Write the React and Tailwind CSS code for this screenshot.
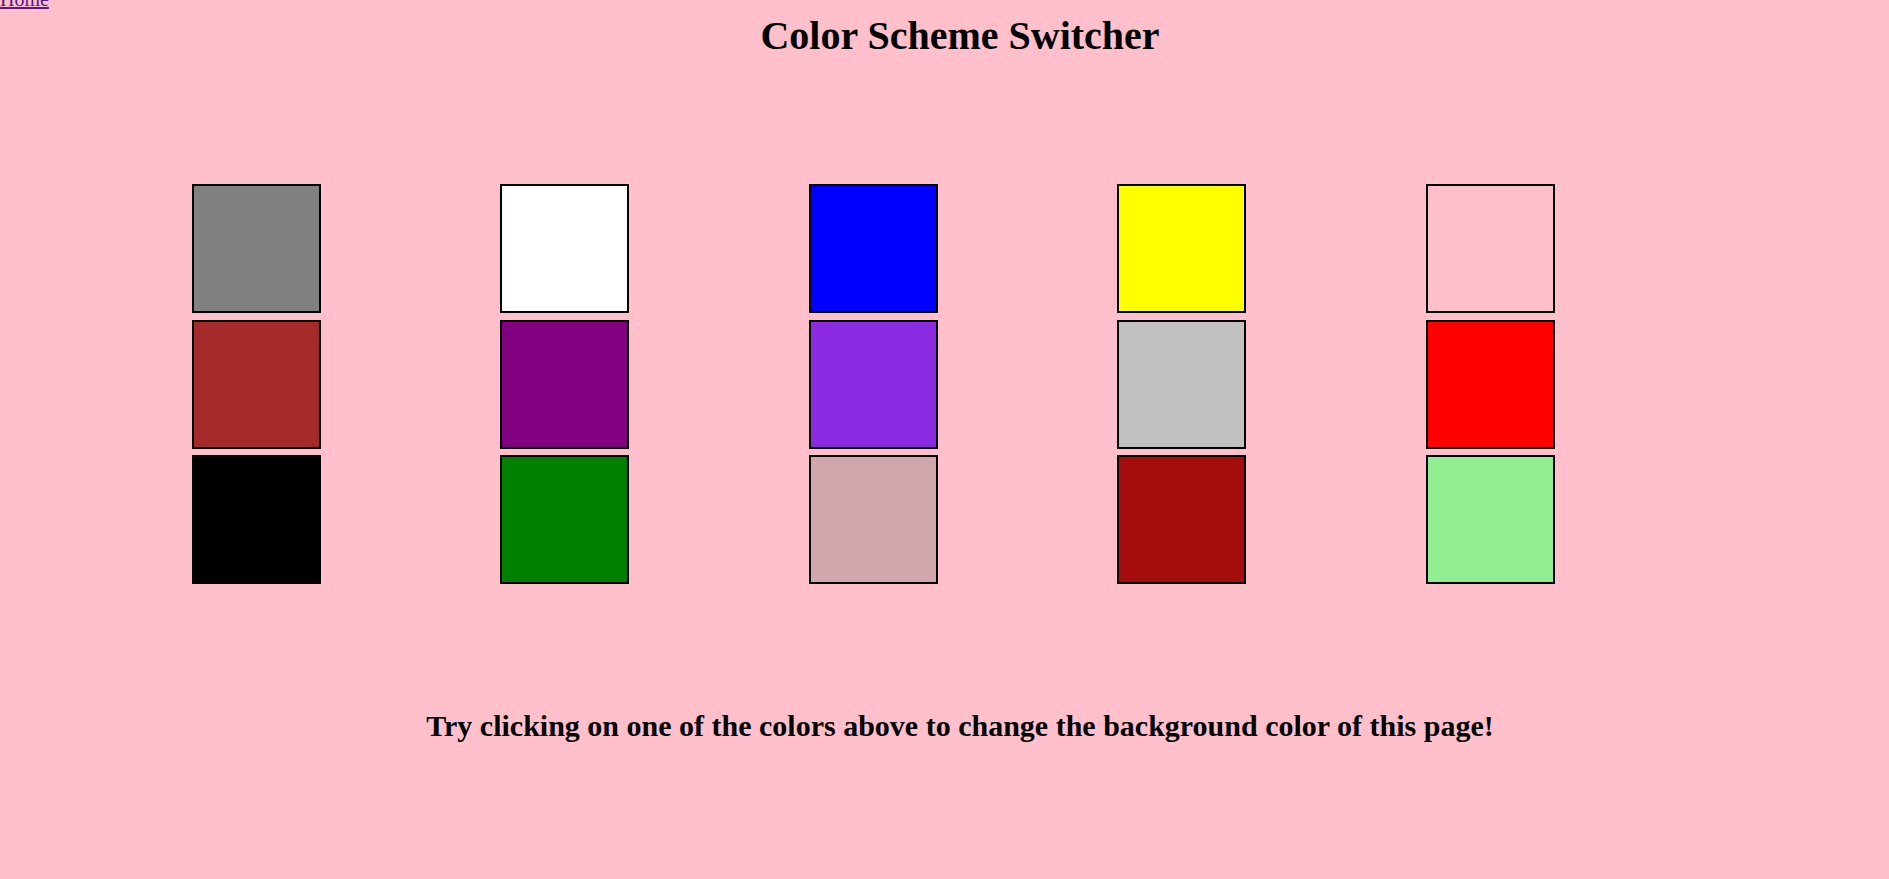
export default function App() {
    const colors = [
        "#808080", "#ffffff", "#0000ff", "#ffff00", "#ffc0cb",
        "#a52a2a", "#800080", "#8a2be2", "#c0c0c0", "#ff0000",
        "#000000", "#008000", "#d1a6ad", "#a60e0e", "#90ee90",
    ]

    return (
        <div className="w-[1920px] min-h-screen bg-[#ffc0cb] text-black font-['Liberation_Serif',serif] overflow-hidden">
            {/* link sits partly scrolled off the top */}
            <a href="#" className="block w-fit -mt-[12px] text-[20px] leading-[23px] text-[#551a8b] underline">
                Home
            </a>

            <h1 className="mt-[1.5px] text-center text-[40px] leading-[46px] font-bold">
                Color Scheme Switcher
            </h1>

            <div className="mt-[125.5px] pl-[192px] grid grid-cols-[repeat(5,129px)] gap-x-[179.4px] gap-y-[6.5px]">
                {colors.map((c, i) => (
                    <div
                        key={i}
                        className="w-[129px] h-[129px] border-2 border-black cursor-pointer"
                        style={{ backgroundColor: c }}
                    />
                ))}
            </div>

            <h2 className="mt-[124px] text-center text-[30px] leading-[35px] font-bold">
                Try clicking on one of the colors above to change the background color of this page!
            </h2>
        </div>
    )
}
